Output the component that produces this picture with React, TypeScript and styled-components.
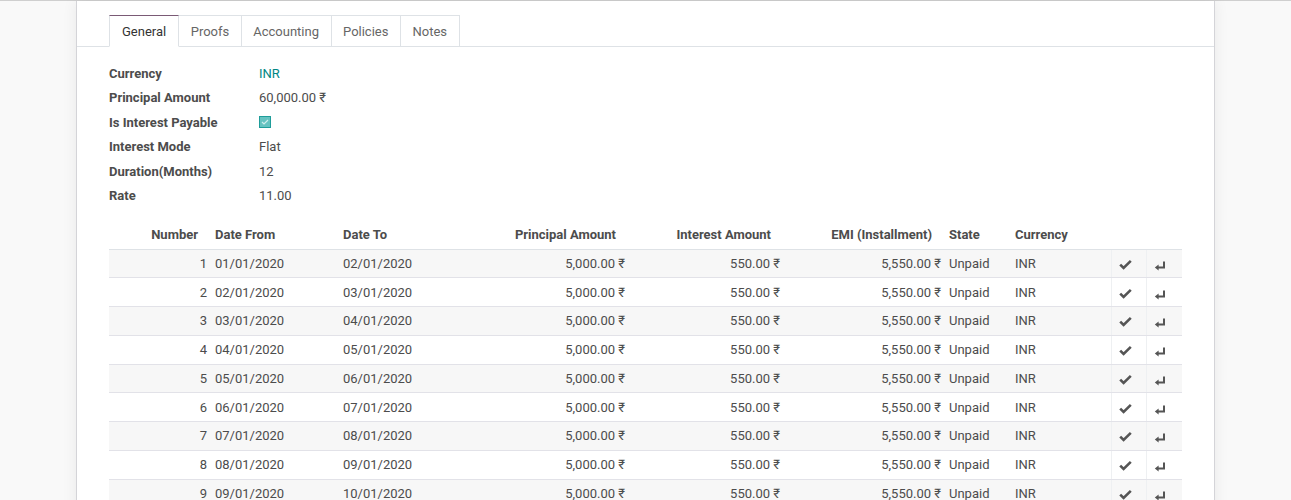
import React from "react";
import styled, { createGlobalStyle } from "styled-components";

const Global = createGlobalStyle`
  html, body { margin: 0; padding: 0; }
  body {
    background: #f9f9f9;
    font-family: Roboto, "Noto Sans", "DejaVu Sans", sans-serif;
    font-size: 13px;
    color: #4c4c4c;
  }
`;

const Page = styled.div`
  border-top: 1px solid #cfcfcf;
  display: flex;
  justify-content: flex-start;
  padding-left: 76px;
  min-height: 520px;
`;

const Sheet = styled.div`
  width: 1137px;
  background: #fff;
  border-left: 1px solid #d4d4d8;
  border-right: 1px solid #d4d4d8;
  box-shadow: 0 0 14px rgba(0, 0, 0, 0.07);
  padding-top: 14px;
`;

const Tabs = styled.ul`
  list-style: none;
  margin: 0;
  padding: 0 0 0 32px;
  display: flex;
  border-bottom: 1px solid #dee2e6;
`;

const Tab = styled.li<{ $active?: boolean }>`
  height: 32px;
  padding: 0 ${(p) => (p.$active ? "12px" : "11.5px")};
  display: flex;
  align-items: center;
  box-sizing: border-box;
  border: 1px solid #dee2e6;
  border-left-width: ${(p) => (p.$active ? "1px" : "0")};
  border-top: 1px solid ${(p) => (p.$active ? "#7a5a75" : "#dee2e6")};
  background: #fff;
  margin-bottom: -1px;
  border-bottom-color: ${(p) => (p.$active ? "#fff" : "#dee2e6")};
  color: ${(p) => (p.$active ? "#333" : "#666")};
  font-size: 13px;
`;

const Body = styled.div`
  padding: 14px 32px 0 32px;
`;

const Fields = styled.div`
  display: grid;
  grid-template-columns: 150px 1fr;
  grid-auto-rows: 24.5px;
  align-items: center;
`;

const Label = styled.div`
  font-weight: 700;
  color: #4c4c4c;
`;

const Value = styled.div<{ $link?: boolean }>`
  color: ${(p) => (p.$link ? "#008784" : "#4c4c4c")};
  display: flex;
  align-items: center;
`;

const CheckBox = styled.span`
  width: 10px;
  height: 10px;
  border: 1px solid #1f9d9a;
  background: #66c3c1;
  display: inline-flex;
  align-items: center;
  justify-content: center;
`;

const Table = styled.table`
  margin-top: 12px;
  width: 1073px;
  border-collapse: collapse;
  table-layout: fixed;
`;

const Th = styled.th<{ $right?: boolean }>`
  height: 28.5px;
  font-weight: 700;
  text-align: ${(p) => (p.$right ? "right" : "left")};
  padding: 0 ${(p) => (p.$right ? "13px" : "4px")} 0 4px;
  white-space: nowrap;
  color: #4c4c4c;
  border-bottom: 1px solid #dee2e6;
`;

const Tr = styled.tr<{ $odd?: boolean }>`
  background: ${(p) => (p.$odd ? "#f7f7f7" : "#fff")};
`;

const Td = styled.td<{ $right?: boolean; $icon?: boolean }>`
  height: 27.75px;
  padding: 0 4px 0 ${(p) => (p.$icon ? "7px" : "4px")};
  text-align: ${(p) => (p.$right ? "right" : "left")};
  border-bottom: 1px solid #e2e2e8;
  border-left: ${(p) => (p.$icon ? "1px solid #eef0f2" : "none")};
  white-space: nowrap;
  color: #4c4c4c;
`;

const IconSvg = styled.svg`
  display: inline-block;
  vertical-align: middle;
`;

const CheckIcon = () => (
  <IconSvg width="13" height="11" viewBox="0 0 13 11">
    <path d="M1.2 5.6 L4.6 9 L11.8 1.8" fill="none" stroke="#555" strokeWidth="2.6" strokeLinejoin="miter" />
  </IconSvg>
);

const ReturnIcon = () => (
  <IconSvg width="12" height="10" viewBox="0 0 12 10" style={{ marginTop: 3 }}>
    <path d="M10 0.5 V6.5 H4" fill="none" stroke="#555" strokeWidth="2" />
    <path d="M0.8 6.5 L4.6 3.4 L4.6 9.6 Z" fill="#555" />
  </IconSvg>
);

const cols = [102, 128, 141, 149, 155, 161, 66, 100, 35, 36];

const pad = (n: number) => String(n).padStart(2, "0");

const rows = Array.from({ length: 12 }, (_, i) => {
  const n = i + 1;
  const toMonth = n === 12 ? 1 : n + 1;
  const toYear = n === 12 ? 2021 : 2020;
  return {
    n,
    from: `${pad(n)}/01/2020`,
    to: `${pad(toMonth)}/01/${toYear}`,
  };
});

const R = "\u00a0\u20b9";

export default function App() {
  return (
    <>
      <Global />
      <Page>
        <Sheet>
          <Tabs>
            <Tab $active>General</Tab>
            <Tab>Proofs</Tab>
            <Tab>Accounting</Tab>
            <Tab>Policies</Tab>
            <Tab>Notes</Tab>
          </Tabs>
          <Body>
            <Fields>
              <Label>Currency</Label>
              <Value $link>INR</Value>
              <Label>Principal Amount</Label>
              <Value>60,000.00{R}</Value>
              <Label>Is Interest Payable</Label>
              <Value>
                <CheckBox>
                  <svg width="8" height="6" viewBox="0 0 8 6">
                    <path d="M1 3 L3 5 L7 1" fill="none" stroke="#cfeeed" strokeWidth="1.2" />
                  </svg>
                </CheckBox>
              </Value>
              <Label>Interest Mode</Label>
              <Value>Flat</Value>
              <Label>Duration(Months)</Label>
              <Value>12</Value>
              <Label>Rate</Label>
              <Value>11.00</Value>
            </Fields>
            <Table>
              <colgroup>
                {cols.map((w, i) => (
                  <col key={i} style={{ width: w }} />
                ))}
              </colgroup>
              <thead>
                <tr>
                  <Th $right>Number</Th>
                  <Th>Date From</Th>
                  <Th>Date To</Th>
                  <Th $right>Principal Amount</Th>
                  <Th $right>Interest Amount</Th>
                  <Th $right>EMI (Installment)</Th>
                  <Th>State</Th>
                  <Th>Currency</Th>
                  <Th />
                  <Th />
                </tr>
              </thead>
              <tbody>
                {rows.map((r) => (
                  <Tr key={r.n} $odd={r.n % 2 === 1}>
                    <Td $right>{r.n}</Td>
                    <Td>{r.from}</Td>
                    <Td>{r.to}</Td>
                    <Td $right>5,000.00{R}</Td>
                    <Td $right>550.00{R}</Td>
                    <Td $right>5,550.00{R}</Td>
                    <Td>Unpaid</Td>
                    <Td>INR</Td>
                    <Td $icon>
                      <CheckIcon />
                    </Td>
                    <Td $icon>
                      <ReturnIcon />
                    </Td>
                  </Tr>
                ))}
              </tbody>
            </Table>
          </Body>
        </Sheet>
      </Page>
    </>
  );
}
